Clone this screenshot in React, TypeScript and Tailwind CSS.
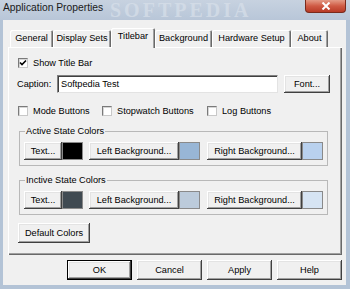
import React from "react";

function Btn({ children, className = "" }: { children: React.ReactNode; className?: string }) {
  return (
    <div
      className={
        "flex items-center justify-center bg-[#f0f0f0] text-black shadow-[inset_-1px_-1px_0_#404040,inset_1px_1px_0_#ffffff,inset_-2px_-2px_0_#a0a0a0,inset_2px_2px_0_#e3e3e3] " +
        className
      }
    >
      {children}
    </div>
  );
}

function Check({ checked = false }: { checked?: boolean }) {
  return (
    <div className="w-[10px] h-[10px] bg-white border border-t-[#7a7a7a] border-l-[#7a7a7a] border-r-[#c8c8c8] border-b-[#c8c8c8] shadow-[inset_1px_1px_0_#d6d6d6] flex items-center justify-center shrink-0">
      {checked && (
        <svg width="8" height="8" viewBox="0 0 8 8">
          <path d="M1 3.5 L3 5.5 L7 1.5" stroke="#000" strokeWidth="1.6" fill="none" />
        </svg>
      )}
    </div>
  );
}

function Tab({ label, w, selected = false }: { label: string; w: string; selected?: boolean }) {
  if (selected) {
    return (
      <div
        className={
          "h-[20px] -mb-[1px] bg-[#f0f0f0] flex items-start justify-center pt-[3px] rounded-t-[2px] shadow-[inset_1px_1px_0_#ffffff,inset_-1px_0_0_#696969,inset_-2px_0_0_#a0a0a0] relative z-10 " +
          w
        }
      >
        {label}
      </div>
    );
  }
  return (
    <div
      className={
        "h-[17px] flex items-center justify-center rounded-t-[2px] shadow-[inset_1px_1px_0_#ffffff,inset_-1px_0_0_#696969,inset_-2px_0_0_#a0a0a0] " +
        w
      }
    >
      {label}
    </div>
  );
}

function ColorGroup({ title, inactive = false }: { title: string; inactive?: boolean }) {
  return (
    <fieldset className="ml-[11px] w-[309px] border border-[#b8b8b8] pb-[5px]">
      <legend className="ml-[5px] px-[1px] leading-[11px]">{title}</legend>
      <div className="flex items-center pl-[4px] pt-[5px]">
        <Btn className="w-[38px] h-[18px]">Text...</Btn>
        <div
          className={
            "w-[21px] h-[18px] border border-[#8a8a8a] " + (inactive ? "bg-[#404a52]" : "bg-black")
          }
        />
        <Btn className="ml-[6px] w-[90px] h-[18px]">Left Background...</Btn>
        <div
          className={
            "w-[21px] h-[18px] border border-[#8a8a8a] " + (inactive ? "bg-[#bccbdb]" : "bg-[#98b6d6]")
          }
        />
        <Btn className="ml-[7px] w-[95px] h-[18px]">Right Background...</Btn>
        <div
          className={
            "w-[21px] h-[18px] border border-[#8a8a8a] " + (inactive ? "bg-[#d6e4f3]" : "bg-[#b9d1ee]")
          }
        />
      </div>
    </fieldset>
  );
}

export default function App() {
  return (
    <div className="w-[350px] h-[289px] bg-[#b3c3d6] flex flex-col overflow-hidden relative font-['Liberation_Sans',Arial,sans-serif] text-[9.2px] leading-[11px] text-black">
      {/* title bar */}
      <div className="h-[20px] flex items-start justify-between relative bg-linear-to-b from-[#c7d2e0] to-[#b8c6d8] shrink-0">
        <div className="pl-[3px] pt-[2px] text-[10.3px] leading-[12px] text-[#1a1a1a] relative z-10">
          Application Properties
        </div>
        <div className="absolute left-[110px] top-[0px] text-[20px] leading-[20px] font-bold tracking-[3px] text-[#d8e0ea] opacity-70 font-['Liberation_Serif',serif]">
          SOFTPEDIA
        </div>
        <div className="mr-[4px] w-[41px] h-[13px] rounded-b-[4px] bg-linear-to-b from-[#e39a86] via-[#cf5a44] to-[#b83a26] border border-t-0 border-[#7a2a1c] flex items-center justify-center relative z-10">
          <svg width="10" height="8" viewBox="0 0 10 8">
            <path d="M1.5 0.5 L8.5 7.5 M8.5 0.5 L1.5 7.5" stroke="#ffffff" strokeWidth="2" />
          </svg>
        </div>
      </div>

      {/* content */}
      <div className="ml-[3px] mr-[4px] mb-[4px] flex-1 bg-[#f0f0f0] flex flex-col">
        <div className="pl-[5px] pr-[4px] pt-[8px]">
          {/* tabs */}
          <div className="flex items-end h-[19px] pl-[2px]">
            <Tab label="General" w="w-[43px]" />
            <Tab label="Display Sets" w="w-[58px]" />
            <Tab label="Titlebar" w="w-[44px]" selected />
            <Tab label="Background" w="w-[57px]" />
            <Tab label="Hardware Setup" w="w-[79px]" />
            <Tab label="About" w="w-[37px]" />
          </div>
          {/* panel */}
          <div className="h-[208px] flex flex-col pt-[11px] shadow-[inset_1px_1px_0_#ffffff,inset_-1px_-1px_0_#696969,inset_-2px_-2px_0_#a0a0a0]">
            <div className="flex items-center h-[10px] pl-[10px]">
              <Check checked />
              <span className="ml-[5px]">Show Title Bar</span>
            </div>
            <div className="mt-[7px] flex items-center h-[18px] pl-[9px]">
              <span className="w-[36px]">Caption:</span>
              <div className="ml-[4px] w-[221px] h-[18px] bg-white border border-t-[#808080] border-l-[#808080] border-r-[#e3e3e3] border-b-[#e3e3e3] shadow-[inset_1px_1px_0_#404040] flex items-center pl-[3px]">
                Softpedia Test
              </div>
              <Btn className="ml-[6px] w-[46px] h-[18px]">Font...</Btn>
            </div>
            <div className="mt-[13px] flex items-center h-[10px] pl-[10px]">
              <div className="flex items-center w-[84px]">
                <Check />
                <span className="ml-[5px]">Mode Buttons</span>
              </div>
              <div className="flex items-center w-[105px]">
                <Check />
                <span className="ml-[5px]">Stopwatch Buttons</span>
              </div>
              <div className="flex items-center">
                <Check />
                <span className="ml-[5px]">Log Buttons</span>
              </div>
            </div>
            <div className="mt-[10px]">
              <ColorGroup title="Active State Colors" />
            </div>
            <div className="mt-[9px]">
              <ColorGroup title="Inctive State Colors" inactive />
            </div>
            <Btn className="mt-[8px] ml-[10px] w-[72px] h-[20px]">Default Colors</Btn>
          </div>
        </div>
        {/* bottom buttons */}
        <div className="flex justify-end gap-[5px] pr-[4px] mt-[5px]">
          <div className="w-[65px] h-[20px] border border-black flex">
            <Btn className="flex-1">OK</Btn>
          </div>
          <Btn className="w-[65px] h-[20px]">Cancel</Btn>
          <Btn className="w-[65px] h-[20px]">Apply</Btn>
          <Btn className="w-[65px] h-[20px]">Help</Btn>
        </div>
      </div>
    </div>
  );
}
